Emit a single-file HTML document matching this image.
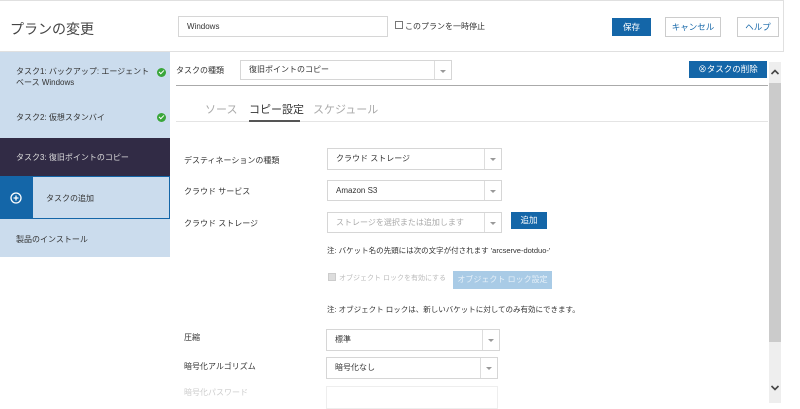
<!DOCTYPE html>
<html><head><meta charset="utf-8"><style>
*{box-sizing:border-box;margin:0;padding:0}
body{width:800px;height:409px;background:#fff;font-family:"Liberation Sans","Noto Sans CJK JP",sans-serif;font-size:8px;color:#333;position:relative;overflow:hidden}
.a{position:absolute}
.box{position:absolute;border:1px solid #d6d6d6;background:#fff}
.sel{position:absolute;border:1px solid #d6d6d6;background:#fff;padding-left:8px;line-height:20px;font-size:8px}
.sel:after{content:"";position:absolute;right:0;top:0;bottom:0;width:16px;border-left:1px solid #ddd}
.sel i{position:absolute;right:5px;top:9px;border:3px solid transparent;border-top:3px solid #999}
.btn{position:absolute;background:#1466a8;color:#fff;text-align:center;font-size:8.5px}
.btn2{position:absolute;border:1px solid #ccc;color:#1466a8;text-align:center;font-size:8.5px;background:#fff}
.lbl{position:absolute;font-size:8px;color:#333}
.ok{position:absolute;width:9px;height:9px;border-radius:50%;background:#3aa63a}
.ok:after{content:"";position:absolute;left:2px;top:2px;width:4px;height:2px;border-left:1.5px solid #fff;border-bottom:1.5px solid #fff;transform:rotate(-45deg)}
</style></head><body>
<div class="a" style="left:0;top:0;width:784px;height:52px;border:1px solid #e0e0e0;border-left:none"></div>
<div class="a" style="left:10px;top:19px;font-size:14px;color:#444">プランの変更</div>
<div class="box" style="left:178px;top:16px;width:210px;height:21px;padding:5px 8px;font-size:8px">Windows</div>
<div class="a" style="left:395px;top:21px;width:8px;height:8px;border:1px solid #777"></div>
<div class="a" style="left:405px;top:21px;font-size:8px">このプランを一時停止</div>
<div class="btn" style="left:612px;top:18px;width:39px;height:18px;line-height:18px">保存</div>
<div class="btn2" style="left:665px;top:17px;width:56px;height:20px;line-height:18px">キャンセル</div>
<div class="btn2" style="left:737px;top:17px;width:42px;height:20px;line-height:18px">ヘルプ</div>

<div class="a" style="left:0;top:52px;width:170px;height:205px;background:#cbdced"></div>
<div class="lbl" style="left:16px;top:66px;line-height:11px">タスク1: バックアップ: エージェント<br>ベース Windows</div>
<div class="ok" style="left:157px;top:68px"></div>
<div class="lbl" style="left:16px;top:112px">タスク2: 仮想スタンバイ</div>
<div class="ok" style="left:157px;top:113px"></div>
<div class="a" style="left:0;top:138px;width:170px;height:38px;background:#312b45;color:#ddd;padding:14px 16px;font-size:8px">タスク3: 復旧ポイントのコピー</div>
<div class="a" style="left:0;top:176px;width:32px;height:43px;background:#1466a8"></div>
<svg class="a" style="left:10px;top:192px" width="12" height="12"><circle cx="6" cy="6" r="5" fill="none" stroke="#fff" stroke-width="1.3"/><path d="M6 3.5v5M3.5 6h5" stroke="#fff" stroke-width="1.3"/></svg>
<div class="a" style="left:32px;top:176px;width:138px;height:43px;border:1px solid #1466a8"></div>
<div class="lbl" style="left:46px;top:193px">タスクの追加</div>
<div class="lbl" style="left:16px;top:234px">製品のインストール</div>

<div class="lbl" style="left:176px;top:65px">タスクの種類</div>
<div class="sel" style="left:240px;top:60px;width:212px;height:20px;line-height:18px">復旧ポイントのコピー<i></i></div>
<div class="btn" style="left:689px;top:61px;width:78px;height:17px;line-height:17px">⊗タスクの削除</div>
<div class="a" style="left:176px;top:85px;width:592px;height:1px;background:#aaa"></div>
<div class="a" style="left:176px;top:86px;width:592px;height:36px;border-bottom:1px solid #e4e4e4"></div>
<div class="a" style="left:205px;top:101px;font-size:11px;color:#aaa">ソース</div>
<div class="a" style="left:249px;top:101px;font-size:11px;color:#333">コピー設定</div>
<div class="a" style="left:249px;top:120px;width:51px;height:2px;background:#555"></div>
<div class="a" style="left:313px;top:101px;font-size:11px;color:#aaa">スケジュール</div>

<div class="lbl" style="left:184px;top:155px">デスティネーションの種類</div>
<div class="sel" style="left:327px;top:148px;width:175px;height:22px;line-height:20px">クラウド ストレージ<i></i></div>
<div class="lbl" style="left:184px;top:186px">クラウド サービス</div>
<div class="sel" style="left:327px;top:180px;width:175px;height:21px;line-height:19px">Amazon S3<i></i></div>
<div class="lbl" style="left:184px;top:218px">クラウド ストレージ</div>
<div class="sel" style="left:327px;top:212px;width:175px;height:21px;line-height:19px;color:#aaa">ストレージを選択または追加します<i></i></div>
<div class="btn" style="left:511px;top:212px;width:36px;height:17px;line-height:17px">追加</div>
<div class="lbl" style="left:327px;top:245px;font-size:7.5px">注: バケット名の先頭には次の文字が付されます 'arcserve-dotduo-'</div>
<div class="a" style="left:328px;top:273px;width:8px;height:8px;background:#ddd;border:1px solid #ccc"></div>
<div class="lbl" style="left:339px;top:273px;color:#bbb;font-size:7px">オブジェクト ロックを有効にする</div>
<div class="a" style="left:453px;top:271px;width:99px;height:18px;background:#a9cbe6;color:#e6f0f8;text-align:center;line-height:18px;font-size:8px">オブジェクト ロック設定</div>
<div class="lbl" style="left:327px;top:304px;font-size:7.5px">注: オブジェクト ロックは、新しいバケットに対してのみ有効にできます。</div>
<div class="lbl" style="left:184px;top:332px">圧縮</div>
<div class="sel" style="left:326px;top:329px;width:174px;height:22px">標準<i></i></div>
<div class="lbl" style="left:184px;top:361px">暗号化アルゴリズム</div>
<div class="sel" style="left:326px;top:357px;width:172px;height:22px">暗号化なし<i></i></div>
<div class="lbl" style="left:184px;top:387px;color:#ccc">暗号化パスワード</div>
<div class="a" style="left:326px;top:386px;width:172px;height:23px;border:1px solid #eee"></div>

<div class="a" style="left:769px;top:62px;width:12px;height:341px;background:#eee"></div>
<div class="a" style="left:769px;top:83px;width:12px;height:259px;background:#cbcbcb"></div>
<svg class="a" style="left:770px;top:68px" width="10" height="8"><path d="M1.5 6L5 2.5 8.5 6" fill="none" stroke="#444" stroke-width="1.6"/></svg>
<svg class="a" style="left:770px;top:384px" width="10" height="8"><path d="M1.5 2L5 5.5 8.5 2" fill="none" stroke="#444" stroke-width="1.6"/></svg>
</body></html>
